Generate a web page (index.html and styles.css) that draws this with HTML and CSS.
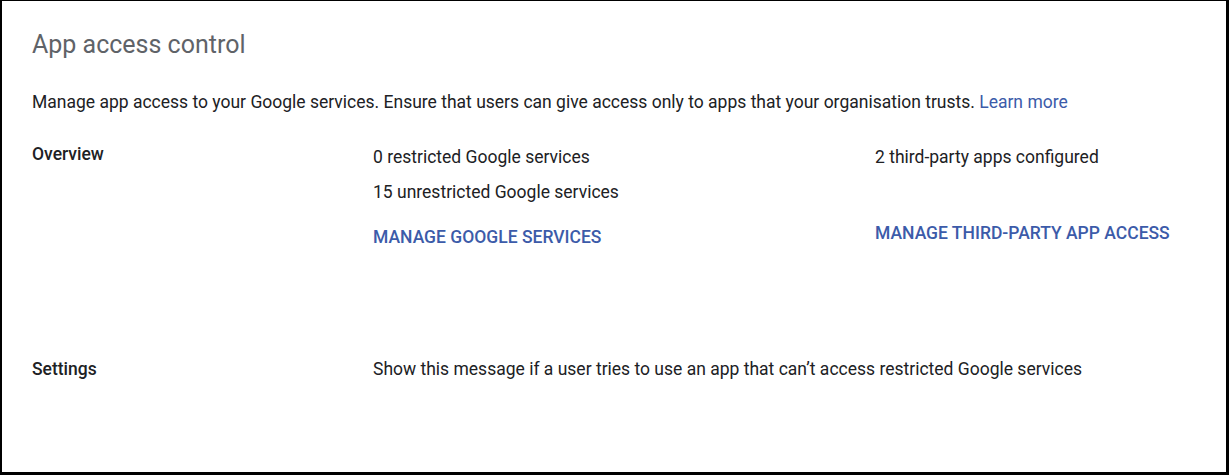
FILE: index.html
```html
<!DOCTYPE html>
<html lang="en">
<head>
<meta charset="utf-8">
<title>App access control</title>
<link rel="stylesheet" href="styles.css">
</head>
<body>
<div class="frame">
  <h1 class="title">App access control</h1>
  <p class="intro">Manage app access to your Google services. Ensure that users can give access only to apps that your organisation trusts. <a class="link" href="#">Learn more</a></p>
  <div class="row overview">
    <div class="label">Overview</div>
    <div class="col col-services">
      <div class="line">0 restricted Google services</div>
      <div class="line line2">15 unrestricted Google services</div>
      <a class="action" href="#">MANAGE GOOGLE SERVICES</a>
    </div>
    <div class="col col-apps">
      <div class="line">2 third-party apps configured</div>
      <a class="action action-apps" href="#">MANAGE THIRD-PARTY APP ACCESS</a>
    </div>
  </div>
  <div class="row settings">
    <div class="label">Settings</div>
    <div class="col col-wide">
      <div class="line">Show this message if a user tries to use an app that can’t access restricted Google services</div>
    </div>
  </div>
</div>
</body>
</html>
```

FILE: styles.css
```css
html, body {
  margin: 0;
  padding: 0;
  background: #ffffff;
}
body {
  font-family: Roboto, "Liberation Sans", Arial, sans-serif;
  color: #202124;
}
.frame {
  box-sizing: border-box;
  width: 1229px;
  height: 475px;
  border-style: solid;
  border-color: #000000;
  border-width: 1px 3px 3px 2px;
  padding: 0 30px;
}
.title {
  margin: 28px 0 0 0;
  font-size: 25px;
  font-weight: 400;
  line-height: 32px;
  color: #5f6368;
}
.intro {
  margin: 29px 0 0 0;
  font-size: 17.5px;
  line-height: 24px;
}
.link {
  color: #3c5ba9;
  text-decoration: none;
}
.row {
  display: grid;
  grid-template-columns: 341px 502px 1fr;
  font-size: 17.5px;
  line-height: 24px;
}
.overview {
  margin-top: 31px;
  height: 200px;
}
.label {
  font-weight: 500;
  margin-top: -3px;
}
.col {
  display: flex;
  flex-direction: column;
  align-items: flex-start;
}
.line2 {
  margin-top: 11px;
}
.action {
  margin-top: 21px;
  color: #3c5ba9;
  font-weight: 500;
  text-decoration: none;
}
.action-apps {
  margin-top: 52px;
}
.settings {
  margin-top: 12px;
}
.settings .label {
  margin-top: 0;
}
.col-wide {
  grid-column: 2 / 4;
}
```
